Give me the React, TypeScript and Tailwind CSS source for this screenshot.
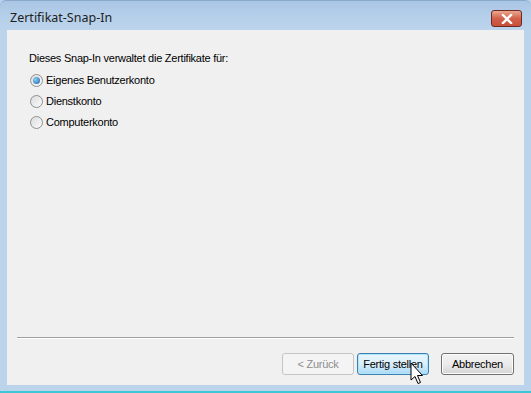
const Radio = ({ checked, label }: { checked?: boolean; label: string }) => (
  <label className="flex items-center gap-[3px] h-[21px]">
    <span className="w-[13px] h-[13px] rounded-full border border-[#8e8f8f] bg-gradient-to-br from-[#dcdcdc] to-[#fbfbfb] flex items-center justify-center">
      {checked && (
        <span className="w-[7px] h-[7px] rounded-full bg-[radial-gradient(circle_at_35%_35%,#8ad0f5,#1b5fa8)]" />
      )}
    </span>
    <span>{label}</span>
  </label>
);

const Cursor = () => (
  <svg width="16" height="24" viewBox="0 0 16 24" className="absolute left-[410px] top-[362px]">
    <path
      d="M1 1 L1 18 L5 14.5 L8 21.5 L10.5 20.5 L7.5 13.5 L12.5 13.5 Z"
      fill="#fff"
      stroke="#000"
      strokeWidth="1"
      strokeLinejoin="miter"
    />
  </svg>
);

export default function App() {
  return (
    <div
      className="relative w-[531px] h-[393px] bg-[#bcd3ec] flex flex-col text-[11px] tracking-[-0.25px] text-black overflow-hidden"
      style={{ fontFamily: '"Liberation Sans", Arial, sans-serif' }}
    >
      <div className="h-[30px] shrink-0 flex items-start justify-between pl-[10px] pr-[9px] bg-gradient-to-b from-[#a9c6e5] via-[#b5cfea] to-[#bcd3ec] border-t border-[#8aa9cc] rounded-t-[6px]">
        <span className="mt-[8px] text-[12.5px] tracking-normal text-[#1e1e1e]" style={{ fontFamily: '"Noto Sans", "Liberation Sans", sans-serif' }}>
          Zertifikat-Snap-In
        </span>
        <div className="mt-[9px] w-[31px] h-[17px] rounded-[3px] border border-[#6e2a22] bg-gradient-to-b from-[#e9a98f] via-[#d2604a] to-[#c8503a] flex items-center justify-center">
          <svg width="12" height="10" viewBox="0 0 12 10">
            <path d="M2 1 L10 9 M10 1 L2 9" stroke="#fff" strokeWidth="2.4" strokeLinecap="square" />
          </svg>
        </div>
      </div>

      <div className="flex-1 mx-[7px] bg-[#f0f0f0] flex flex-col">
        <div className="pl-[22px] pt-[21px] flex flex-col">
          <p className="h-[14px] leading-[14px] mb-[5px]">Dieses Snap-In verwaltet die Zertifikate für:</p>
          <div className="pl-[1px] flex flex-col">
            <Radio checked label="Eigenes Benutzerkonto" />
            <Radio label="Dienstkonto" />
            <Radio label="Computerkonto" />
          </div>
        </div>

        <div className="mt-auto ml-[10px] mr-[10px] border-t border-[#a0a0a0] border-b border-b-white" />

        <div className="flex justify-end pr-[10px] pt-[14px] pb-[10px]">
          <button className="w-[72px] h-[22px] rounded-[3px] border border-[#c5c5c5] bg-[#f4f4f4] text-[#8d8d8d]">
            &lt; Zurück
          </button>
          <button className="ml-[3px] w-[72px] h-[22px] rounded-[3px] border border-[#3c7fb1] bg-gradient-to-b from-[#eaf6fd] via-[#d9f0fc] to-[#a7d9f5] shadow-[inset_0_0_0_1px_#b0e4fb]">
            Fertig stellen
          </button>
          <button className="ml-[12px] w-[73px] h-[22px] rounded-[3px] border border-[#707070] bg-gradient-to-b from-[#f2f2f2] via-[#ebebeb] to-[#d5d5d5] shadow-[inset_0_0_0_1px_#fcfcfc]">
            Abbrechen
          </button>
        </div>
      </div>
      <div className="h-[6px] shrink-0" />
      <div className="h-[2px] shrink-0 bg-[#3cc6d6]" />
      <Cursor />
    </div>
  );
}
